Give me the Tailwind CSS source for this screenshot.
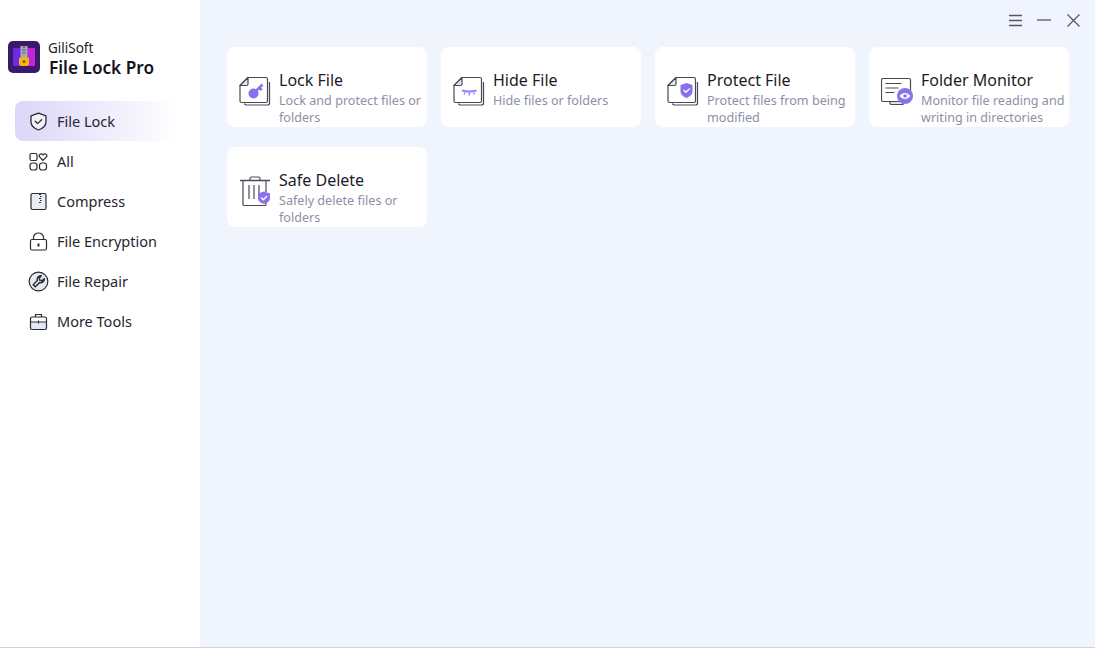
<!DOCTYPE html>
<html lang="en">
<head>
  <meta charset="UTF-8" />
  <title>GiliSoft File Lock Pro</title>
  <script src="https://cdn.jsdelivr.net/npm/@tailwindcss/browser@4"></script>
</head>
<body class="bg-white overflow-hidden font-['Noto_Sans',sans-serif] text-[#1c1c28]">
  <div class="flex h-[648px] w-[1095px] border-b border-[#d2d3d8]">

    <!-- Sidebar -->
    <aside class="w-[200px] shrink-0 bg-white">
      <div class="flex gap-2 pl-2 pt-[41px] h-[101px] items-start">
        <svg class="w-8 h-8 shrink-0" viewBox="0 0 32 32">
          <rect width="32" height="32" rx="5" fill="#3b1a6e"/>
          <path d="M5 8a1 1 0 0 1 1-1h20a1 1 0 0 1 1 1v16a1 1 0 0 1-1 1H6a1 1 0 0 1-1-1z" fill="#6d28e8"/>
          <path d="M20 7h6a1 1 0 0 1 1 1v16a1 1 0 0 1-1 1h-6z" fill="#c026d3"/>
          <rect x="12.500" y="5" width="7" height="13" fill="#a8a8b4"/>
          <path d="M14.500 6h3M14.500 9h3M14.500 12h3" stroke="#555" stroke-width="1.200"/>
          <rect x="11" y="16" width="10" height="9" rx="2.500" fill="#f5b70f"/>
          <circle cx="16" cy="20.500" r="1.500" fill="#8a5a00"/>
        </svg>
        <div class="-mt-[1px]">
          <div class="text-[13.500px] leading-[16px] text-[#222]">GiliSoft</div>
          <div class="text-[17.200px] leading-[23px] font-semibold text-[#14141c] ml-[1px]">File Lock Pro</div>
        </div>
      </div>

      <nav class="flex flex-col text-[14.500px] text-[#26262e]">
        <a class="ml-[15px] w-[165px] h-10 flex items-center gap-[9px] pl-[14px] rounded-l-lg bg-gradient-to-r from-[#dcd6f8] to-white">
          <svg class="w-[19px] h-[19px] shrink-0" viewBox="0 0 19 19" fill="none" stroke="#2b2b33" stroke-width="1.300" stroke-linejoin="round" stroke-linecap="round">
            <path d="M9.500 1.200 17 3.800v6c0 4-3.300 6.700-7.500 8.200C5.300 16.500 2 13.800 2 9.800v-6z" fill="#f1f1f8"/>
            <path d="m6.300 9.300 2.300 2.300 4-3.800"/>
          </svg>
          <span class="pt-[2px]">File Lock</span>
        </a>
        <a class="ml-[15px] w-[165px] h-10 flex items-center gap-[9px] pl-[14px]">
          <svg class="w-[19px] h-[19px] shrink-0" viewBox="0 0 19 19" fill="none" stroke="#2b2b33" stroke-width="1.200">
            <rect x="1" y="1.500" width="7" height="7" rx="1.500"/>
            <path d="M14 8.500 10.800 5.200a2 2 0 0 1 0-2.800c1-1 2.300-.7 3.200.4.900-1.100 2.200-1.400 3.200-.4a2 2 0 0 1 0 2.800z"/>
            <rect x="1" y="11" width="7" height="7" rx="2.500"/>
            <rect x="10.500" y="11" width="7" height="7" rx="2.500"/>
          </svg>
          <span class="pt-[2px]">All</span>
        </a>
        <a class="ml-[15px] w-[165px] h-10 flex items-center gap-[9px] pl-[14px]">
          <svg class="w-[19px] h-[19px] shrink-0" viewBox="0 0 19 19" fill="none" stroke="#2b2b33" stroke-width="1.200">
            <rect x="2" y="1.500" width="15" height="16" rx="1.500" fill="#e9ebf6"/>
            <path d="M10 2.500h2M11 4.500h1.500M10 6.500h2M11 8.500h1.500M10 10.500h2" stroke-width="1"/>
          </svg>
          <span class="pt-[2px]">Compress</span>
        </a>
        <a class="ml-[15px] w-[165px] h-10 flex items-center gap-[9px] pl-[14px]">
          <svg class="w-[19px] h-[19px] shrink-0" viewBox="0 0 19 19" fill="none" stroke="#2b2b33" stroke-width="1.200">
            <rect x="1.500" y="7.500" width="16" height="10.500" rx="1.500"/>
            <path d="M4.500 7.500V5.500a5 4.500 0 0 1 10 0v2"/>
            <path d="M9.500 11.500v3" stroke-width="2"/>
          </svg>
          <span class="pt-[2px]">File Encryption</span>
        </a>
        <a class="ml-[15px] w-[165px] h-10 flex items-center gap-[9px] pl-[14px]">
          <svg class="w-[19px] h-[19px] shrink-0 scale-110" viewBox="0 0 19 19" fill="none" stroke="#2b2b33" stroke-width="1.100" stroke-linejoin="round">
            <circle cx="9.500" cy="9.500" r="8.500" fill="#e6e8f3"/>
            <path d="M12 4.300a3.300 3.300 0 0 0-3.500 4.300L4.700 12.400l1.900 1.900 3.800-3.800a3.300 3.300 0 0 0 4.300-3.500l-2 1.800-2-.4-.5-2z" fill="#fff" stroke-width="1.400"/>
          </svg>
          <span class="pt-[2px]">File Repair</span>
        </a>
        <a class="ml-[15px] w-[165px] h-10 flex items-center gap-[9px] pl-[14px]">
          <svg class="w-[19px] h-[19px] shrink-0" viewBox="0 0 19 19" fill="none" stroke="#2b2b33" stroke-width="1.200">
            <path d="M2 10.500h15v6.500H2z" fill="#e3e6f4" stroke="none"/>
            <rect x="1.500" y="5" width="16" height="12.500" rx="1.500"/>
            <path d="M1.500 10h16M6.500 5V2.500h6V5M9.500 8.500v3" />
          </svg>
          <span class="pt-[2px]">More Tools</span>
        </a>
      </nav>
    </aside>

    <!-- Main -->
    <main class="flex-1 bg-[#f0f4fd] pl-[27px] relative">
      <div class="h-[47px] flex items-center justify-end pr-[15px] pb-[7px]">
        <svg class="w-[13px] h-[13px]" viewBox="0 0 13 13" stroke="#55566a" stroke-width="1.300"><path d="M0 1.500h13M0 6.500h13M0 11.500h13"/></svg>
        <svg class="w-[14px] h-[14px] ml-[15px]" viewBox="0 0 14 14" stroke="#55566a" stroke-width="1.300"><path d="M0 7h14"/></svg>
        <svg class="w-[13px] h-[13px] ml-[16px]" viewBox="0 0 13 13" stroke="#55566a" stroke-width="1.300"><path d="m.5.500 12 12M12.500.500l-12 12"/></svg>
      </div>

      <div class="grid grid-cols-[repeat(4,200px)] auto-rows-[80px] gap-x-[14px] gap-y-[20px]">
        <div class="bg-white rounded-lg flex pl-[12px] pt-[23px]">
          <svg class="w-8 h-[32px] shrink-0 mt-[5px]" viewBox="0 0 32 32" fill="none" stroke="#4a4a55" stroke-width="1.200" stroke-linejoin="round">
            <path d="M30.500 7v21a2 2 0 0 1-2 2h-21a2 2 0 0 1-2-1.500" />
            <path d="M9 2.500h18a1.500 1.500 0 0 1 1.500 1.500v22a1.500 1.500 0 0 1-1.500 1.500H2.500A1.500 1.500 0 0 1 1 26V10.500z" fill="#fff"/>
            <path d="M9 2.500V9a1.500 1.500 0 0 1-1.500 1.500H1z" fill="#e4e5ee"/>
            <circle cx="14.500" cy="18.500" r="5" fill="#8a70ee" stroke="none"/>
            <path d="m17 16 6.500-6.500M20.500 13l2.200 2.200" stroke="#8a70ee" stroke-width="2.600"/>
          </svg>
          <div class="ml-[8px]">
            <div class="text-[16px] leading-[21px]">Lock File</div>
            <div class="mt-[1px] text-[12.600px] leading-[17px] text-[#8e8fa6]">Lock and protect files or folders</div>
          </div>
        </div>

        <div class="bg-white rounded-lg flex pl-[12px] pt-[23px]">
          <svg class="w-8 h-[32px] shrink-0 mt-[5px]" viewBox="0 0 32 32" fill="none" stroke="#4a4a55" stroke-width="1.200" stroke-linejoin="round">
            <path d="M30.500 7v21a2 2 0 0 1-2 2h-21a2 2 0 0 1-2-1.500" />
            <path d="M9 2.500h18a1.500 1.500 0 0 1 1.500 1.500v22a1.500 1.500 0 0 1-1.500 1.500H2.500A1.500 1.500 0 0 1 1 26V10.500z" fill="#fff"/>
            <path d="M9 2.500V9a1.500 1.500 0 0 1-1.500 1.500H1z" fill="#e4e5ee"/>
            <path d="M9 15.500c5 1.600 9 1.600 14.500 0" stroke="#9b7bff" stroke-width="2.200"/>
            <path d="M12 17.500 11 19.500M16.200 18v2.500M20.500 17.500l1 2" stroke="#9b7bff" stroke-width="1.400"/>
          </svg>
          <div class="ml-[8px]">
            <div class="text-[16px] leading-[21px]">Hide File</div>
            <div class="mt-[1px] text-[12.600px] leading-[17px] text-[#8e8fa6]">Hide files or folders</div>
          </div>
        </div>

        <div class="bg-white rounded-lg flex pl-[12px] pt-[23px]">
          <svg class="w-8 h-[32px] shrink-0 mt-[5px]" viewBox="0 0 32 32" fill="none" stroke="#4a4a55" stroke-width="1.200" stroke-linejoin="round">
            <path d="M30.500 7v21a2 2 0 0 1-2 2h-21a2 2 0 0 1-2-1.500" />
            <path d="M9 2.500h18a1.500 1.500 0 0 1 1.500 1.500v22a1.500 1.500 0 0 1-1.500 1.500H2.500A1.500 1.500 0 0 1 1 26V10.500z" fill="#fff"/>
            <path d="M9 2.500V9a1.500 1.500 0 0 1-1.500 1.500H1z" fill="#e4e5ee"/>
            <path d="M19.500 8l6 2v6c0 3.500-2.600 5.700-6 7-3.400-1.300-6-3.500-6-7v-6z" fill="#8a70ee" stroke="none"/>
            <path d="m16.500 15 2.300 2.300 4-3.800" stroke="#fff" stroke-width="1.300"/>
          </svg>
          <div class="ml-[8px]">
            <div class="text-[16px] leading-[21px]">Protect File</div>
            <div class="mt-[1px] text-[12.600px] leading-[17px] text-[#8e8fa6]">Protect files from being modified</div>
          </div>
        </div>

        <div class="bg-white rounded-lg flex pl-[12px] pt-[23px]">
          <svg class="w-8 h-[32px] shrink-0 mt-[5px]" viewBox="0 0 32 32" fill="none" stroke="#4a4a55" stroke-width="1.200" stroke-linejoin="round">
            <path d="M9 26v2a1.500 1.500 0 0 0 1.500 1.500H22V26z" fill="#dfe0ea"/>
            <rect x=".5" y="3.500" width="29" height="23" rx="1.500" fill="#fff"/>
            <path d="M4.500 8.500h16M4.500 13h13M4.500 17.500h9"/>
            <circle cx="24" cy="21" r="8" fill="#8a70ee" stroke="none"/>
            <path d="M18.500 21c3.300-4 7.700-4 11 0-3.300 4-7.700 4-11 0z" fill="#fff" stroke="none"/>
            <circle cx="24" cy="21" r="1.800" fill="#8a70ee" stroke="none"/>
          </svg>
          <div class="ml-[8px]">
            <div class="text-[16px] leading-[21px]">Folder Monitor</div>
            <div class="mt-[1px] text-[12.600px] leading-[17px] text-[#8e8fa6]">Monitor file reading and writing in directories</div>
          </div>
        </div>

        <div class="bg-white rounded-lg flex pl-[12px] pt-[23px]">
          <svg class="w-8 h-[32px] shrink-0 mt-[5px]" viewBox="0 0 32 32" fill="none" stroke="#4a4a55" stroke-width="1.200" stroke-linejoin="round">
            <path d="M1 5.500h30" stroke-width="1.500"/>
            <path d="M11 5.500V3.500A1.500 1.500 0 0 1 12.500 2h7A1.500 1.500 0 0 1 21 3.500v2"/>
            <path d="M4 5.500V29.500a1 1 0 0 0 1 1h21a1 1 0 0 0 1-1V25"/>
            <path d="M27 5.500V17"/>
            <path d="M10 10v14M15 10v14M20 10v10"/>
            <path d="M25 16.500l6 2v4.500c0 3.300-2.600 5-6 6-3.400-1-6-2.700-6-6v-4.500z" fill="#8a70ee" stroke="none"/>
            <path d="m22 22.500 2.300 2.300 3.800-3.800" stroke="#fff" stroke-width="1.300"/>
          </svg>
          <div class="ml-[8px]">
            <div class="text-[16px] leading-[21px]">Safe Delete</div>
            <div class="mt-[1px] text-[12.600px] leading-[17px] text-[#8e8fa6]">Safely delete files or folders</div>
          </div>
        </div>
      </div>
    </main>
  </div>
</body>
</html>
